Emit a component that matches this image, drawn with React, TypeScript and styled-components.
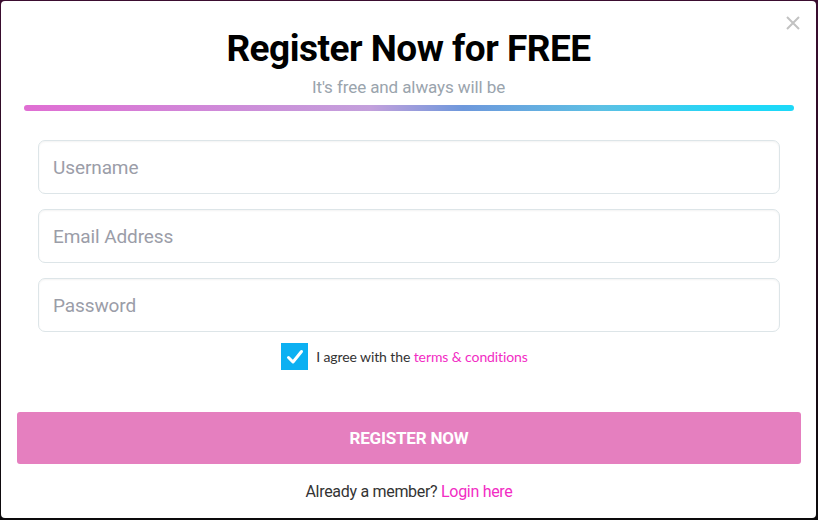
import React from "react";
import styled, { createGlobalStyle } from "styled-components";

const GlobalStyle = createGlobalStyle`
  html, body {
    margin: 0;
    padding: 0;
    height: 100%;
  }
  body {
    background: linear-gradient(180deg, #3b0d30 0%, #1d0a18 60%, #0c0a0c 100%);
    font-family: "Source Sans Pro", Roboto, "Noto Sans", sans-serif;
  }
  * { box-sizing: border-box; }
`;

const Modal = styled.div`
  position: relative;
  margin: 1px 2px 0 1px;
  height: 517px;
  background: #ffffff;
  border-radius: 4px;
  display: flex;
  flex-direction: column;
  padding-top: 26px;
`;

const Close = styled.button`
  position: absolute;
  top: 13px;
  right: 14px;
  width: 18px;
  height: 18px;
  padding: 0;
  border: 0;
  background: none;
  cursor: pointer;
`;

const Header = styled.header`
  display: flex;
  flex-direction: column;
  align-items: center;
`;

const Title = styled.h1`
  margin: 0;
  font-family: Roboto, sans-serif;
  font-weight: 700;
  font-size: 37px;
  line-height: 44px;
  letter-spacing: -0.5px;
  color: #000;
`;

const Subtitle = styled.p`
  margin: 6px 0 0;
  font-family: Roboto, sans-serif;
  font-size: 17px;
  line-height: 20px;
  color: #9aa4ad;
  letter-spacing: -0.1px;
`;

const GradientBar = styled.div`
  margin: 8px 22px 0 23px;
  height: 6px;
  border-radius: 3px;
  background: linear-gradient(
    90deg,
    #e06ed3 0%,
    #d186d8 22%,
    #c3a0dc 45%,
    #6e98dc 57%,
    #5cc0e4 75%,
    #1ed8f8 92%,
    #1ed8f8 100%
  );
`;

const Form = styled.form`
  display: flex;
  flex-direction: column;
  padding: 29px 36px 0 37px;
  gap: 15px;
`;

const Input = styled.input`
  height: 54px;
  width: 100%;
  border: 1px solid #dde5e8;
  border-radius: 7px;
  box-shadow: inset 0 1px 2px rgba(0, 0, 0, 0.05);
  padding: 0 14px;
  font-family: Roboto, sans-serif;
  font-size: 19px;
  letter-spacing: -0.1px;
  color: #333;
  outline: none;
  &::placeholder {
    color: #9b9da8;
  }
`;

const AgreeRow = styled.label`
  display: flex;
  align-items: center;
  justify-content: center;
  gap: 8px;
  margin-top: -4px;
  margin-left: -9px;
  font-family: Lato, sans-serif;
  font-size: 14px;
  letter-spacing: -0.1px;
  color: #333;
`;

const CheckBox = styled.span`
  width: 27px;
  height: 27px;
  background: #0cb0f2;
  display: flex;
  align-items: center;
  justify-content: center;
`;

const Link = styled.a`
  color: #f22cc4;
  text-decoration: none;
`;

const Footer = styled.div`
  display: flex;
  flex-direction: column;
  align-items: center;
  padding: 0 15px 0 16px;
  margin-top: 42px;
`;

const SubmitButton = styled.button`
  width: 100%;
  height: 52px;
  border: 0;
  border-radius: 3px;
  background: #e57fbf;
  color: #fff;
  font-family: Roboto, sans-serif;
  font-weight: 700;
  font-size: 17px;
  letter-spacing: -0.2px;
  text-transform: uppercase;
  cursor: pointer;
`;

const MemberText = styled.p`
  margin: 18px 0 0;
  font-family: Roboto, sans-serif;
  font-size: 16px;
  color: #333;
  letter-spacing: -0.3px;
`;

export default function App() {
  return (
    <>
      <GlobalStyle />
      <Modal>
        <Close aria-label="close">
          <svg width="18" height="18" viewBox="0 0 18 18">
            <path d="M3 3 L15 15 M15 3 L3 15" stroke="#c2c2c2" strokeWidth="2" />
          </svg>
        </Close>
        <Header>
          <Title>Register Now for FREE</Title>
          <Subtitle>It's free and always will be</Subtitle>
        </Header>
        <GradientBar />
        <Form onSubmit={(e) => e.preventDefault()}>
          <Input type="text" placeholder="Username" />
          <Input type="email" placeholder="Email Address" />
          <Input type="password" placeholder="Password" />
          <AgreeRow>
            <CheckBox>
              <svg width="20" height="20" viewBox="0 0 20 20">
                <path
                  d="M3.5 10.5 L8 15 L16.5 4.5"
                  fill="none"
                  stroke="#fff"
                  strokeWidth="3"
                  strokeLinecap="round"
                  strokeLinejoin="round"
                />
              </svg>
            </CheckBox>
            <span>
              I agree with the <Link href="#">terms &amp; conditions</Link>
            </span>
          </AgreeRow>
        </Form>
        <Footer>
          <SubmitButton type="button">Register Now</SubmitButton>
          <MemberText>
            Already a member? <Link href="#">Login here</Link>
          </MemberText>
        </Footer>
      </Modal>
    </>
  );
}
